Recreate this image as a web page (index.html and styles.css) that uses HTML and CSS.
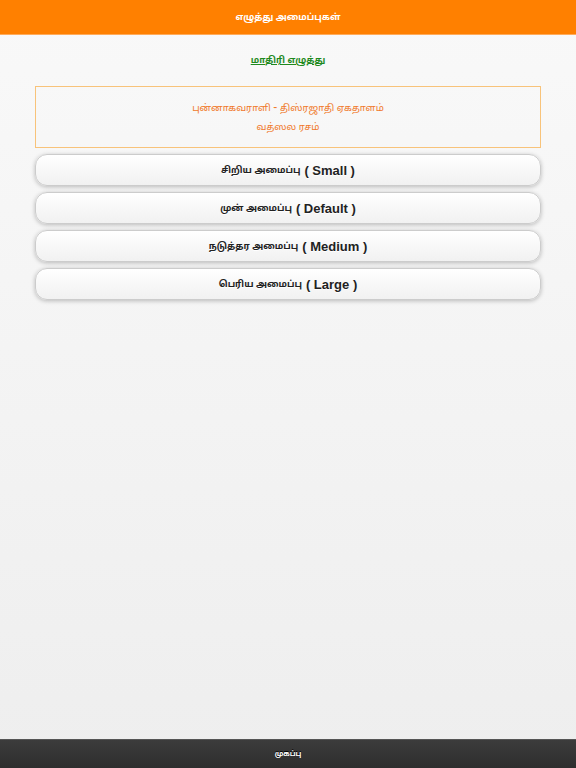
FILE: index.html
```html
<!DOCTYPE html>
<html lang="ta">
<head>
<meta charset="utf-8">
<title>எழுத்து அமைப்புகள்</title>
<link rel="stylesheet" href="styles.css">
</head>
<body>
<div class="page">
  <header class="header">
    <h1 class="title">எழுத்து அமைப்புகள்</h1>
  </header>
  <main class="content">
    <p class="sample-link"><a href="#">மாதிரி எழுத்து</a></p>
    <div class="sample-box">
      <div class="sample-line">புன்னாகவராளி <span class="latin">-</span> திஸ்ரஜாதி ஏகதாளம்</div>
      <div class="sample-line">வத்ஸல ரசம்</div>
    </div>
    <div class="buttons">
      <a class="btn" href="#">சிறிய அமைப்பு <span class="latin">( Small )</span></a>
      <a class="btn" href="#">முன் அமைப்பு <span class="latin">( Default )</span></a>
      <a class="btn" href="#">நடுத்தர அமைப்பு <span class="latin">( Medium )</span></a>
      <a class="btn" href="#">பெரிய அமைப்பு <span class="latin">( Large )</span></a>
    </div>
  </main>
  <footer class="footer">
    <span class="footer-title">முகப்பு</span>
  </footer>
</div>
</body>
</html>
```
FILE: styles.css
```css
html, body {
  margin: 0;
  padding: 0;
  height: 100%;
}
body {
  font-family: "Liberation Sans", "Noto Sans Tamil", "Noto Sans", sans-serif;
  font-stretch: condensed;
  background: linear-gradient(#f9f9f9, #eeeeee);
}
.page {
  display: flex;
  flex-direction: column;
  min-height: 768px;
}
.header {
  height: 34px;
  background: #ff8000;
  border-bottom: 1px solid #ffab5a;
  display: flex;
  align-items: center;
  justify-content: center;
}
.title {
  margin: 0;
  font-size: 9px;
  font-weight: bold;
  color: #ffffff;
}
.content {
  flex: 1;
  padding: 14px 35px 0 35px;
}
.sample-link {
  margin: 0;
  text-align: center;
  font-size: 9px;
  font-weight: bold;
  line-height: 22px;
}
.sample-link a {
  color: #1f8a1f;
  text-decoration: underline;
}
.sample-box {
  margin-top: 15px;
  border: 1px solid #f8c37a;
  box-sizing: border-box;
  height: 62px;
  display: flex;
  flex-direction: column;
  justify-content: center;
  align-items: center;
  gap: 2px;
  color: #f0782a;
  font-size: 9.5px;
}
.sample-line {
  line-height: 17px;
}
.sample-line .latin {
  font-size: 12px;
}
.buttons {
  display: flex;
  flex-direction: column;
  gap: 6px;
  margin-top: 6px;
}
.btn {
  display: flex;
  align-items: center;
  justify-content: center;
  gap: 4px;
  height: 30px;
  border: 1px solid #cccccc;
  border-radius: 12px;
  background: linear-gradient(#ffffff, #f1f1f1);
  box-shadow: 0 1px 4px rgba(0, 0, 0, 0.25);
  color: #222222;
  font-size: 9px;
  font-weight: bold;
  text-decoration: none;
  text-shadow: 0 1px 0 #ffffff;
}
.btn .latin {
  font-size: 13px;
}
.footer {
  height: 28px;
  border-top: 1px solid #555555;
  background: linear-gradient(#3c3c3c, #2e2e2e);
  display: flex;
  align-items: center;
  justify-content: center;
}
.footer-title {
  color: #ffffff;
  font-size: 7px;
  font-weight: bold;
  text-shadow: 0 -1px 0 #000000;
}
```
